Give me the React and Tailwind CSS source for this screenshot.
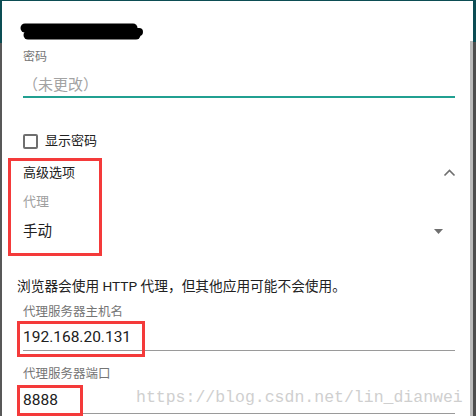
import React from 'react';

const font = { fontFamily: 'Roboto, "Noto Sans CJK SC", sans-serif' };

const Redaction = () => (
  <svg width="126" height="20" viewBox="0 0 126 20">
    <path d="M6 5 L114 5" stroke="#000" strokeWidth="9" strokeLinecap="round" />
    <path d="M9 12 L117 12" stroke="#000" strokeWidth="9" strokeLinecap="round" />
    <path d="M60 8 L120 9" stroke="#000" strokeWidth="8" strokeLinecap="round" />
  </svg>
);

const App = () => {
  return (
    <div className="relative w-[476px] h-[416px] overflow-hidden bg-white flex" style={font}>
      {/* left backdrop strip */}
      <div className="w-[2px] flex flex-col">
        <div className="h-[43px] bg-[#0c4d54]" />
        <div className="flex-1 bg-[#585858]" />
      </div>

      {/* dialog */}
      <div className="flex-1 flex border-t border-[#0c4d54]">
        <div className="flex-1 flex flex-col">
          <div className="h-[42px] pt-[22px] pl-[17px]">
            <Redaction />
          </div>

          <div className="pl-[21px] pr-[15px]">
            <div className="mt-[6px] h-[16px] flex items-center text-[12px] text-[#757575]">密码</div>
            <div className="mt-[10px] h-[20px] flex items-center text-[15px] text-[#a3a3a3]">（未更改）</div>
            <div className="mt-[1px] h-[2px] bg-[#21a091]" />

            <div className="mt-[35px] h-[16px] flex items-center gap-[7px]">
              <div className="w-[15px] h-[15px] border-2 border-[#6f6f6f] rounded-[2px]" />
              <span className="text-[13px] text-[#212121]">显示密码</span>
            </div>

            <div className="mt-[14px] h-[20px] flex items-center justify-between">
              <span className="text-[13px] text-[#212121]">高级选项</span>
              <svg width="13" height="8" viewBox="0 0 13 8" className="mr-[-1px]">
                <path d="M1.5 6.5 L6.5 1.5 L11.5 6.5" fill="none" stroke="#6f6f6f" strokeWidth="1.6" />
              </svg>
            </div>

            <div className="mt-[11px] h-[16px] flex items-center text-[13px] text-[#9e9e9e]">代理</div>

            <div className="mt-[12px] h-[20px] flex items-center justify-between">
              <span className="text-[14.5px] text-[#212121]">手动</span>
              <svg width="9" height="5" viewBox="0 0 9 5" className="mr-[12px] mb-[2px]">
                <path d="M0 0 L9 0 L4.5 5 Z" fill="#6f6f6f" />
              </svg>
            </div>
          </div>

          <div className="mt-[34px] h-[20px] pl-[15px] flex items-center text-[13.7px] text-[#212121] whitespace-nowrap">
            浏览器会使用 HTTP 代理，但其他应用可能不会使用。
          </div>

          <div className="pl-[21px] pr-[15px]">
            <div className="mt-[8px] h-[16px] flex items-center text-[12.5px] text-[#757575]">代理服务器主机名</div>
            <div className="mt-[8px] h-[20px] flex items-center text-[15.5px] text-[#212121]">192.168.20.131</div>
            <div className="mt-[2px] h-px bg-[#9a9a9a]" />

            <div className="mt-[15px] h-[16px] flex items-center text-[12.5px] text-[#757575]">代理服务器端口</div>
            <div className="mt-[9px] h-[20px] flex items-center text-[15.5px] text-[#212121]">8888</div>
            <div className="mt-[2px] h-px bg-[#9a9a9a]" />
          </div>
        </div>

        {/* scrollbar */}
        <div className="w-[3px] flex flex-col">
          <div className="h-[40px] bg-white" />
          <div className="flex-1 bg-[#bcbcbc]" />
        </div>
      </div>

      {/* right backdrop strip */}
      <div className="w-[3px] flex flex-col">
        <div className="h-[42px] bg-[#0c4d54]" />
        <div className="flex-1 bg-[#4e4e4e]" />
      </div>

      {/* annotation boxes */}
      <div className="absolute left-[8px] top-[158px] w-[94px] h-[98px] border-[3px] border-[#f43a3a]" />
      <div className="absolute left-[17px] top-[321px] w-[128px] h-[36px] border-[3px] border-[#f43a3a]" />
      <div className="absolute left-[17px] top-[385px] w-[66px] h-[31px] border-[3px] border-[#f43a3a]" />

      {/* watermark */}
      <div
        className="absolute left-[136px] top-[390px] text-[16.5px] leading-none text-[#cfcfcf] whitespace-nowrap"
        style={{ fontFamily: '"Liberation Mono", monospace' }}
      >
        https://blog.csdn.net/lin_dianwei
      </div>
    </div>
  );
};

export default App;
